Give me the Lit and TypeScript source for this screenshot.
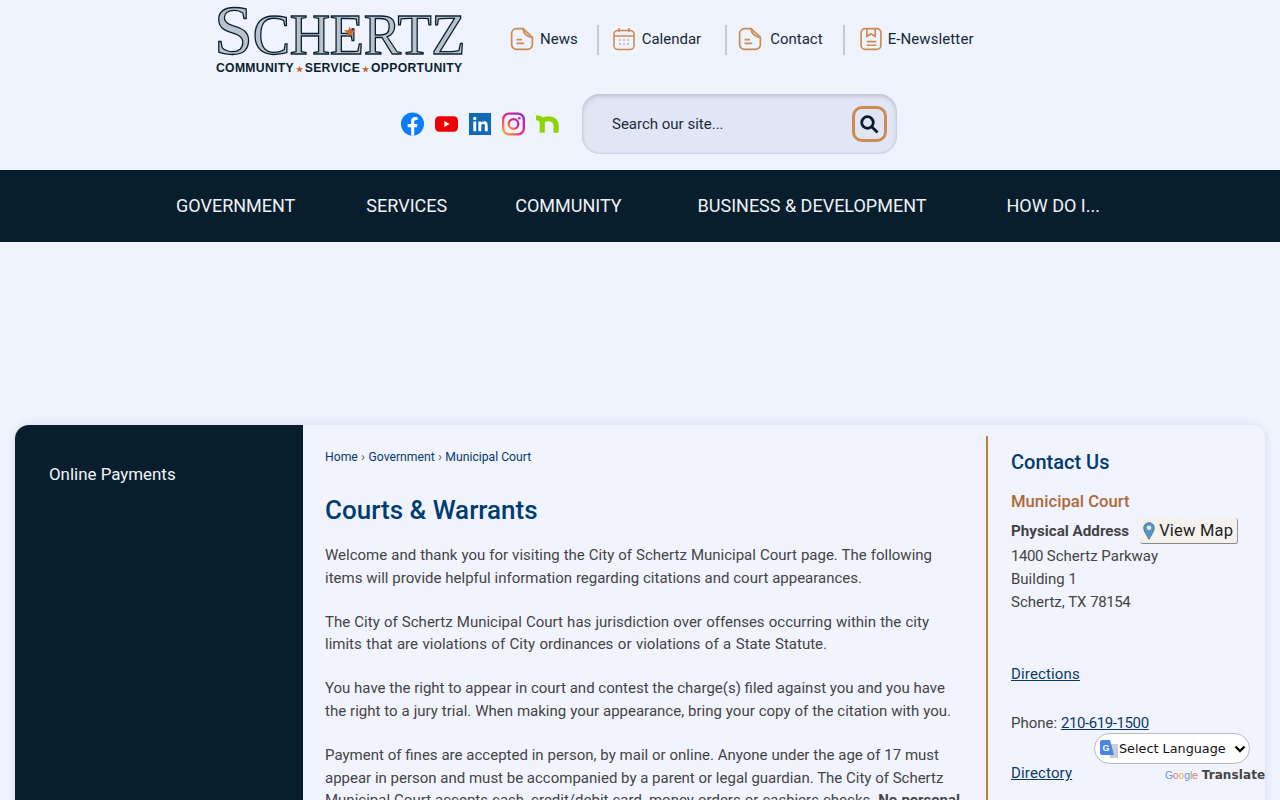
import { LitElement, html, css, svg } from "lit";
import { customElement } from "lit/decorators.js";

const docIcon = svg`<path d="M12 1.5H6A4.5 4.5 0 0 0 1.5 6v10A4.5 4.5 0 0 0 6 20.500h10a4.500 4.500 0 0 0 4.500-4.500V9.500z"/><path d="M12 1.500c.5 4.500 3 7.500 8.500 8"/><path d="M6 11.500h5M6 15h7"/>`;
const calIcon = svg`<rect x="1.500" y="3.500" width="20" height="19" rx="4"/><path d="M1.500 9h20M6.500 1v4M16.500 1v4"/><path d="M7 13h1M11 13h1M15 13h1M7 17h1M11 17h1M15 17h1" stroke-width="2"/>`;
const bookIcon = svg`<rect x="1.500" y="1.500" width="19" height="20" rx="4"/><path d="M7 2v7l4-2.500L15 9V2"/><path d="M7 14h9M7 17.500h9"/>`;

type Line = [unknown, number];
const paras: Line[][] = [
  [["Welcome and thank you for visiting the City of Schertz Municipal Court page. The following", 607],
   ["items will provide helpful information regarding citations and court appearances.", 537]],
  [["The City of Schertz Municipal Court has jurisdiction over offenses occurring within the city", 604],
   ["limits that are violations of City ordinances or violations of a State Statute.", 502]],
  [["You have the right to appear in court and contest the charge(s) filed against you and you have", 620],
   ["the right to a jury trial. When making your appearance, bring your copy of the citation with you.", 626]],
  [["Payment of fines are accepted in person, by mail or online. Anyone under the age of 17 must", 614],
   ["appear in person and must be accompanied by a parent or legal guardian. The City of Schertz", 618],
   [html`Municipal Court accepts cash, credit/debit card, money orders or cashiers checks. <b>No personal</b>`, 635]],
];

@customElement("app-root")
export class AppRoot extends LitElement {
  static styles = css`
    :host { display: block; height: 800px; overflow: hidden; position: relative; background: #eff3fd; font-family: Roboto, "Liberation Sans", sans-serif; color: #444; }
    a { color: inherit; text-decoration: none; }
    .top { display: flex; padding: 8px 0 0 216px; height: 78px; box-sizing: border-box; }
    .logo { width: 248px; height: 66px; display: flex; flex-direction: column; color: #0a1f2e; flex: none; position: relative; }
    .wordmark { font-family: "Liberation Serif", serif; font-weight: 400; font-size: 56px; line-height: 46px; height: 51px; white-space: nowrap; letter-spacing: -0.3px; margin-left: -2px; -webkit-text-stroke: 1.300px #0a1f2e; color: #b9c2cf; }
    .wordmark .cap { font-size: 70px; }
    .star { position: absolute; left: 127px; top: 15px; color: #c9662c; font-size: 15px; line-height: 18px; }
    .tagline { font-family: "Liberation Sans", sans-serif; font-weight: 700; font-size: 12.200px; line-height: 14px; margin-top: 3px; white-space: nowrap; letter-spacing: .3px; }
    .tagline i { color: #c9662c; font-style: normal; font-size: 8px; margin: 0 1.800px; }
    .links { display: flex; align-items: center; margin: 16px 0 0 46px; height: 30px; }
    .link { display: flex; align-items: center; font-size: 15px; color: #15293a; height: 30px; white-space: nowrap; gap: 6px; }
    .link svg { width: 24px; height: 24px; fill: none; stroke: #cf8a53; stroke-width: 1.600; flex: none; }
    .link.wide { gap: 8px; }
    .link.news { letter-spacing: .1px; gap: 5px; }
    .sep { width: 2px; height: 30px; background: #c5cad3; flex: none; margin-top: 2px; }
    .sep.a { margin-left: 19px; margin-right: 13px; }
    .sep.b { margin-left: 24px; margin-right: 11px; }
    .sep.c { margin-left: 20px; margin-right: 14px; }
    .second { display: flex; align-items: center; height: 60px; margin-top: 16px; padding-left: 401px; }
    .social { display: flex; gap: 10.750px; align-items: center; width: 181px; }
    .social svg { width: 23px; height: 24px; flex: none; display: block; }
    .search { width: 315px; height: 60px; box-sizing: border-box; border-radius: 18px; background: #e0e6f3; box-shadow: inset 0 2px 4px rgba(90,100,130,.3), inset 0 -1px 2px rgba(90,100,130,.12); display: flex; align-items: center; justify-content: space-between; padding: 0 10px 0 30px; font-size: 15px; color: #1d2c3a; }
    .sbtn { width: 35px; height: 36px; box-sizing: border-box; border: 3px solid #cf8a53; border-radius: 10px; display: flex; align-items: center; justify-content: center; padding-right: 2px; }
    .sbtn svg { width: 20px; height: 20px; fill: none; stroke: #071c2c; stroke-width: 2.800; }
    nav { margin-top: 16px; height: 72px; box-sizing: border-box; padding-bottom: 2px; background: #091e2d; color: #eef2f8; font-size: 18px; display: flex; align-items: center; }
    nav a { white-space: nowrap; }
    nav a:nth-child(1) { margin-left: 176px; }
    nav a:nth-child(2) { margin-left: 71px; }
    nav a:nth-child(3) { margin-left: 68px; }
    nav a:nth-child(4) { margin-left: 76px; }
    nav a:nth-child(5) { margin-left: 80px; }
    .card { margin: 183px 15px 0; height: 600px; display: flex; border-radius: 14px; background: #f1f4fe; box-shadow: 0 0 8px rgba(120,130,160,.2); overflow: hidden; }
    aside { width: 288px; flex: none; background: #091e2d; color: #f0f4fa; font-size: 16.900px; padding: 39px 0 0 34px; box-sizing: border-box; line-height: 20px; }
    main { width: 683px; flex: none; box-sizing: border-box; padding: 24px 22px 0; }
    .crumbs { font-size: 12.200px; line-height: 16px; color: #0a3a6b; display: flex; gap: 3.500px; white-space: nowrap; }
    .crumbs span { color: #555; }
    h1 { font-size: 26px; line-height: 34px; font-weight: 500; color: #003b71; margin: 28px 0 0; }
    main .p { margin: 0 0 21px; }
    main h1 + .p { margin-top: 17px; }
    .ln { display: block; font-size: 15px; line-height: 22.800px; white-space: nowrap; text-align: justify; text-align-last: justify; }
    .right { flex: none; margin-top: 11px; border-left: 2px solid #c07a43; width: 279px; box-sizing: border-box; padding: 14px 0 0 23px; font-size: 15px; line-height: 23px; }
    .nar { letter-spacing: -.4px; }
    .lnk.w { letter-spacing: .15px; }
    h2 { font-size: 20px; line-height: 24px; font-weight: 500; color: #003b71; margin: 0; }
    h3 { font-size: 16.700px; line-height: 22px; font-weight: 500; color: #ad6a38; margin: 17px 0 0; }
    .addr { display: flex; align-items: center; height: 28px; margin-top: 4px; }
    .addr b { font-weight: 700; color: #444; font-size: 15.200px; }
    .map { display: flex; align-items: center; margin-left: 11px; width: 98px; height: 26px; box-sizing: border-box; background: #f5f2ee; border-radius: 3px; border-right: 1px solid #999; border-bottom: 1px solid #888; color: #222; font-size: 16.500px; letter-spacing: .2px; gap: 4px; padding-left: 3px; white-space: nowrap; }
    .map svg { width: 12px; height: 18px; flex: none; }
    .lnk { color: #0a3a6b; text-decoration: underline; }
    .gapA { margin-top: 49px; }
    .gapB { margin-top: 26px; }
    .gapC { margin-top: 27px; }
    .translate { position: absolute; left: 1094px; top: 733px; width: 156px; height: 31px; box-sizing: border-box; background: #fff; border: 1px solid #b5bac8; border-radius: 16px; display: flex; align-items: center; font-family: "DejaVu Sans", sans-serif; font-size: 12.800px; color: #111; padding-left: 5px; white-space: nowrap; }
    .translate svg.g { width: 18px; height: 18px; flex: none; margin-right: 1px; }
    .translate svg.c { width: 12px; height: 8px; position: absolute; right: 3px; top: 11px; fill: none; stroke: #000; stroke-width: 2.400; }
    .powered { position: absolute; left: 1165px; top: 767px; display: flex; align-items: center; gap: 4px; white-space: nowrap; font-family: "Liberation Sans", sans-serif; line-height: 16px; }
    .powered .gg { font-size: 10.500px; letter-spacing: -.2px; }
    .powered b { font-family: "DejaVu Sans", sans-serif; font-size: 12px; color: #444; font-weight: 700; letter-spacing: .1px; }
  `;

  render() {
    return html`
      <div class="top">
        <div class="logo">
          <div class="wordmark"><span class="cap">S</span>CHERTZ</div>
          <span class="star">★</span>
          <div class="tagline">COMMUNITY<i>★</i>SERVICE<i>★</i>OPPORTUNITY</div>
        </div>
        <div class="links">
          <a class="link"><svg viewBox="0 0 22 22">${docIcon}</svg>News</a>
          <span class="sep a"></span>
          <a class="link"><svg viewBox="0 0 23 24">${calIcon}</svg>Calendar</a>
          <span class="sep b"></span>
          <a class="link wide"><svg viewBox="0 0 22 22">${docIcon}</svg>Contact</a>
          <span class="sep c"></span>
          <a class="link news"><svg viewBox="0 0 22 23">${bookIcon}</svg>E-Newsletter</a>
        </div>
      </div>
      <div class="second">
        <div class="social">
          <svg viewBox="0 0 24 24"><circle cx="12" cy="12" r="12" fill="#0a7cff"/><path fill="#fff" d="M16.700 15.500l.5-3.500h-3.400V9.800c0-1 .5-1.900 2-1.900h1.500V5c-2.600-.5-6.700-.8-6.700 4.300V12H7v3.500h3.600V24h3.200v-8.500z"/></svg>
          <svg viewBox="0 0 24 24"><rect y="4" width="24" height="16" rx="4.500" fill="#e00"/><path d="M9.800 8.800v6.400l5.400-3.200z" fill="#fff"/></svg>
          <svg viewBox="0 0 24 24"><rect x="0" y="0.500" width="23" height="23" fill="#0f69b4"/><path fill="#fff" d="M4.500 9.500h3v10h-3zM6 4.500a1.800 1.800 0 1 1 0 3.600 1.800 1.800 0 0 1 0-3.600zM9.800 9.500h2.900v1.400c.5-.9 1.600-1.700 3.100-1.700 3.100 0 3.700 2 3.700 4.700v5.600h-3v-5c0-1.200 0-2.800-1.700-2.800s-2 1.300-2 2.700v5.100h-3z"/></svg>
          <svg viewBox="0 0 24 24"><defs><linearGradient id="ig" x1="0" y1="1" x2="1" y2="0"><stop offset="0" stop-color="#fdb32b"/><stop offset=".45" stop-color="#ee2a7b"/><stop offset="1" stop-color="#9b23d8"/></linearGradient></defs><rect x="1.200" y="1.200" width="21.600" height="21.600" rx="6" fill="none" stroke="url(#ig)" stroke-width="2.400"/><circle cx="12" cy="12" r="5" fill="none" stroke="url(#ig)" stroke-width="2.400"/><circle cx="18" cy="6" r="1.400" fill="#c32aa3"/></svg>
          <svg viewBox="0 0 24 24"><path fill="none" stroke="#8ed500" stroke-width="5.400" d="M0 5.500c4 0 6.500 2 6.500 6V21M6.500 11.500c0-3 2.500-5 6-5 5 0 8.500 2.500 8.500 7.500v7"/></svg>
        </div>
        <div class="search">
          <span>Search our site...</span>
          <span class="sbtn"><svg viewBox="0 0 20 20"><circle cx="8.500" cy="8.500" r="5.800"/><path d="M13 13l5.500 5.500"/></svg></span>
        </div>
      </div>
      <nav>
        <a>GOVERNMENT</a>
        <a>SERVICES</a>
        <a>COMMUNITY</a>
        <a>BUSINESS &amp; DEVELOPMENT</a>
        <a>HOW DO I...</a>
      </nav>
      <div class="card">
        <aside>Online Payments</aside>
        <main>
          <div class="crumbs"><a>Home</a><span>›</span><a>Government</a><span>›</span><a>Municipal Court</a></div>
          <h1>Courts &amp; Warrants</h1>
          ${paras.map((p) => html`<div class="p">${p.map(([t, w]) => html`<span class="ln" style="width:${w}px">${t}</span>`)}</div>`)}
        </main>
        <div class="right">
          <h2>Contact Us</h2>
          <h3>Municipal Court</h3>
          <div class="addr"><b>Physical Address</b><a class="map"><svg viewBox="0 0 12 18"><path d="M6 .7C2.800.7.700 3 .700 6c0 3.500 3.300 7.500 5.300 11.300C8 13.500 11.300 9.500 11.300 6 11.300 3 9.200.7 6 .7z" fill="#5b93c4" stroke="#3c6f9c" stroke-width=".8"/><circle cx="6" cy="5.800" r="2.300" fill="#dfe9f2"/></svg>View Map</a></div>
          <div><span class="nar">1400</span> Schertz Parkway<br>Building 1<br>Schertz, TX <span class="nar">78154</span></div>
          <div class="gapA"><a class="lnk w">Directions</a></div>
          <div class="gapB">Phone: <a class="lnk nar">210-619-1500</a></div>
          <div class="gapC"><a class="lnk w">Directory</a></div>
        </div>
      </div>
      <div class="translate">
        <svg class="g" viewBox="0 0 18 18"><path d="M8 4h10v14H10z" fill="#c9ccd2"/><path d="M0 2a2 2 0 0 1 2-2h8l4 15H2a2 2 0 0 1-2-2z" fill="#4a86e8"/><text x="2.500" y="11" font-size="9" font-weight="700" fill="#fff" font-family="Liberation Sans">G</text></svg>
        <span>Select Language</span>
        <svg class="c" viewBox="0 0 12 8"><path d="M1.500 1.500L6 6l4.500-4.500"/></svg>
      </div>
      <div class="powered"><span class="gg"><span style="color:#6c93e8">G</span><span style="color:#e27a6e">o</span><span style="color:#e8c04a">o</span><span style="color:#6c93e8">g</span><span style="color:#7cbb7c">l</span><span style="color:#e27a6e">e</span></span><b>Translate</b></div>
    `;
  }
}
